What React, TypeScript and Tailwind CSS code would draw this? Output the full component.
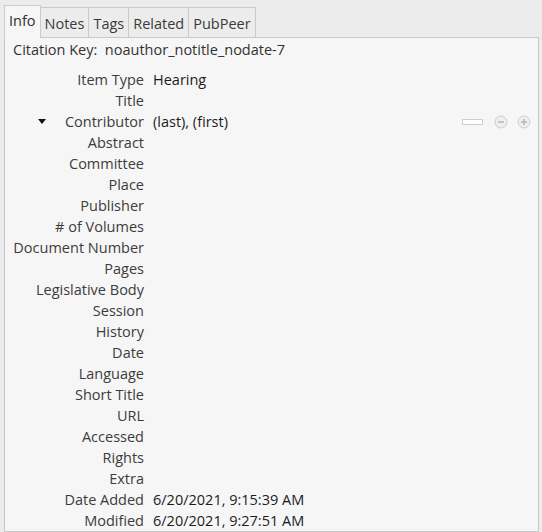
import * as React from "react";

const tabs = ["Info", "Notes", "Tags", "Related", "PubPeer"];

const fields: [string, string][] = [
  ["Item Type", "Hearing"],
  ["Title", ""],
  ["Contributor", "(last), (first)"],
  ["Abstract", ""],
  ["Committee", ""],
  ["Place", ""],
  ["Publisher", ""],
  ["# of Volumes", ""],
  ["Document Number", ""],
  ["Pages", ""],
  ["Legislative Body", ""],
  ["Session", ""],
  ["History", ""],
  ["Date", ""],
  ["Language", ""],
  ["Short Title", ""],
  ["URL", ""],
  ["Accessed", ""],
  ["Rights", ""],
  ["Extra", ""],
  ["Date Added", "6/20/2021, 9:15:39 AM"],
  ["Modified", "6/20/2021, 9:27:51 AM"],
];

function CircleButton({ plus }: { plus?: boolean }) {
  return (
    <svg width="14" height="14" viewBox="0 0 14 14">
      <circle cx="7" cy="7" r="6" fill="#eeeeee" stroke="#cfcfcf" />
      <rect x="4" y="6.25" width="6" height="1.5" fill="#b8b8b8" />
      {plus && <rect x="6.25" y="4" width="1.5" height="6" fill="#b8b8b8" />}
    </svg>
  );
}

// Item pane with tabs, like the one in the reference library client
export default function App() {
  return (
    <div
      className="w-[542px] h-[532px] bg-[#ececec] pl-[4px] pr-[3px] pt-[5px] flex flex-col overflow-hidden text-[14.5px]"
      style={{ fontFamily: '"Open Sans", "Noto Sans", sans-serif' }}
    >
      <div className="flex items-end h-[32px]">
        {tabs.map((t, i) =>
          i === 0 ? (
            <div
              key={t}
              className="relative z-10 -mb-px h-[33px] px-[4px] pb-[2px] flex items-center border border-b-0 border-[#cacaca] bg-[#f6f6f6] text-[#2e2e2e]"
            >
              {t}
            </div>
          ) : (
            <div
              key={t}
              className="h-[30px] px-[4px] pt-[2px] flex items-center border-t border-r border-[#cacaca] text-[#3a3a3a]"
            >
              {t}
            </div>
          )
        )}
      </div>
      <div className="flex-1 border border-[#c8c8c8] bg-[#f6f6f6] pt-px">
        <div className="h-[21px] pl-[8px] flex items-center text-[#333]">
          Citation Key:&nbsp; noauthor_notitle_nodate-7
        </div>
        <div className="mt-[9px] flex flex-col">
          {fields.map(([label, value]) => (
            <div key={label} className="h-[21px] flex items-center">
              {label === "Contributor" ? (
                <div className="w-[139px] pl-[33px] flex items-center justify-between text-[#3c3c3c]">
                  <svg width="8" height="5" viewBox="0 0 8 5">
                    <path d="M0 0 L8 0 L4 5 Z" fill="#111" />
                  </svg>
                  <span>{label}</span>
                </div>
              ) : (
                <div className="w-[139px] text-right text-[#3c3c3c]">{label}</div>
              )}
              <div className="flex-1 pl-[9px] flex items-center text-[#1c1c1c]">
                <span className="flex-1">{value}</span>
                {label === "Contributor" && (
                  <div className="flex items-center pr-[7px]">
                    <div className="w-[21px] h-[6px] border border-[#d0d0d0] bg-white mr-[11px]" />
                    <CircleButton />
                    <div className="w-[9px]" />
                    <CircleButton plus />
                  </div>
                )}
              </div>
            </div>
          ))}
        </div>
      </div>
    </div>
  );
}
